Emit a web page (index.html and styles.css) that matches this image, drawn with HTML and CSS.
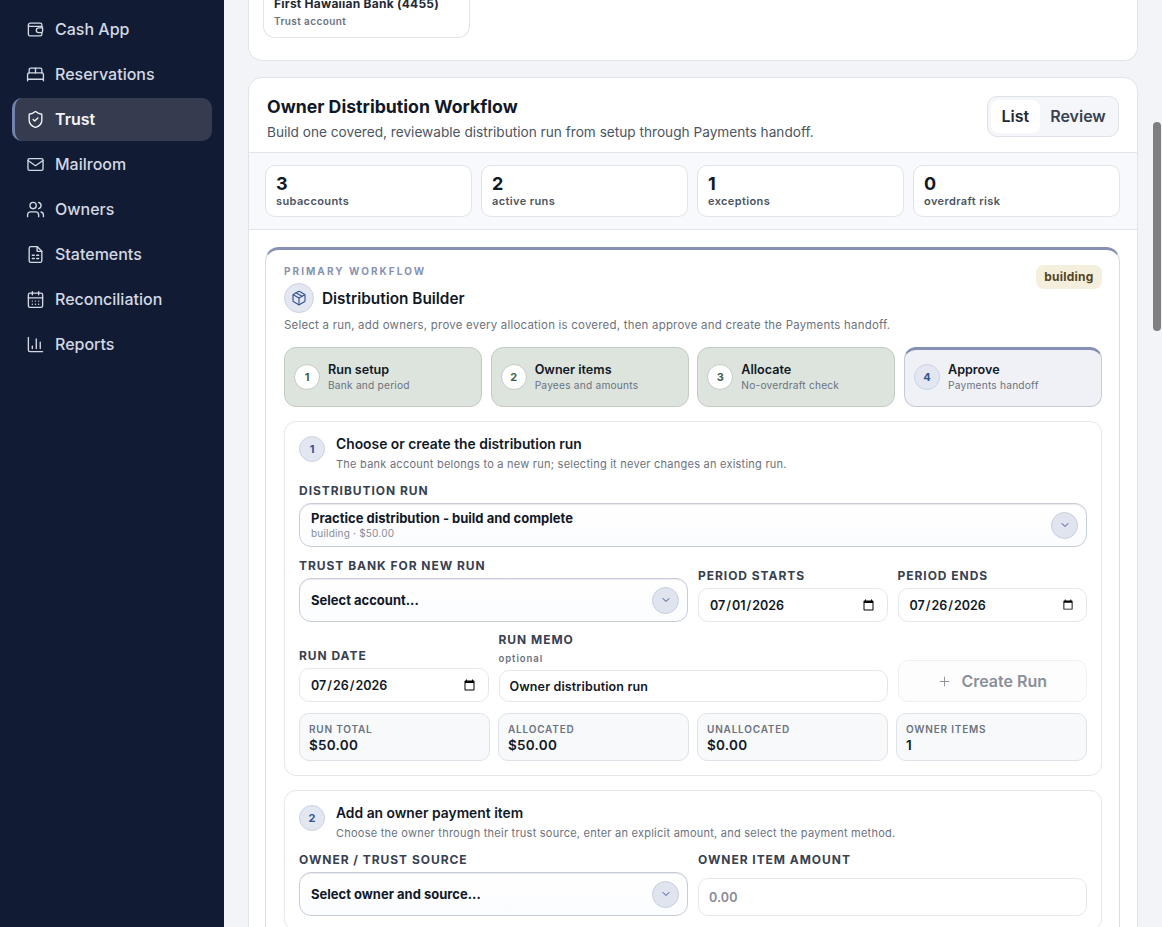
FILE: index.html
```html
<!DOCTYPE html>
<html lang="en">
<head>
    <meta charset="UTF-8">
    <meta name="viewport" content="width=device-width, initial-scale=1.0">
    <title>Owner Distribution Workflow</title>
    <link rel="stylesheet" href="styles.css">
</head>
<body>
    <div class="shell">
        <aside class="sidebar">
            <nav class="nav">
                <a class="nav-item">
                    <svg class="nav-icon" viewBox="0 0 24 24"><path d="M20 8V6a2 2 0 0 0-2-2H5.500A2.500 2.500 0 0 0 3 6.500V18a2 2 0 0 0 2 2h13a2 2 0 0 0 2-2v-2"/><path d="M3 7a2 2 0 0 0 2 1h14a2 2 0 0 1 2 2v4a2 2 0 0 1-2 2h-3a3 3 0 0 1 0-6h5"/></svg>
                    Cash App
                </a>
                <a class="nav-item">
                    <svg class="nav-icon" viewBox="0 0 24 24"><path d="M2 20v-8a2 2 0 0 1 2-2h16a2 2 0 0 1 2 2v8"/><path d="M4 10V6a2 2 0 0 1 2-2h12a2 2 0 0 1 2 2v4"/><path d="M12 4v6"/><path d="M2 18h20"/></svg>
                    Reservations
                </a>
                <a class="nav-item active">
                    <svg class="nav-icon" viewBox="0 0 24 24"><path d="M20 13c0 5-3.500 7.500-7.660 8.950a1 1 0 0 1-.67-.01C7.500 20.500 4 18 4 13V6a1 1 0 0 1 1-1c2 0 4.500-1.200 6.240-2.720a1.170 1.170 0 0 1 1.520 0C14.510 3.810 17 5 19 5a1 1 0 0 1 1 1z"/><path d="m9 12 2 2 4-4"/></svg>
                    Trust
                </a>
                <a class="nav-item">
                    <svg class="nav-icon" viewBox="0 0 24 24"><rect x="2.500" y="4.500" width="19" height="15" rx="2"/><path d="m2.500 7 9.500 6.500L21.500 7"/></svg>
                    Mailroom
                </a>
                <a class="nav-item">
                    <svg class="nav-icon" viewBox="0 0 24 24"><path d="M16 21v-2a4 4 0 0 0-4-4H6a4 4 0 0 0-4 4v2"/><circle cx="9" cy="7" r="4"/><path d="M22 21v-2a4 4 0 0 0-3-3.870"/><path d="M16 3.130a4 4 0 0 1 0 7.750"/></svg>
                    Owners
                </a>
                <a class="nav-item">
                    <svg class="nav-icon" viewBox="0 0 24 24"><path d="M14 2H6a2 2 0 0 0-2 2v16a2 2 0 0 0 2 2h12a2 2 0 0 0 2-2V8z"/><path d="M14 2v6h6"/><path d="M8 13h2.500M13.500 13H16M8 17h2.500M13.500 17H16"/></svg>
                    Statements
                </a>
                <a class="nav-item">
                    <svg class="nav-icon" viewBox="0 0 24 24"><path d="M8 2v4M16 2v4"/><rect x="3" y="4" width="18" height="18" rx="2"/><path d="M3 10h18"/><path d="M8 14h.010M12 14h.010M16 14h.010M8 18h.010M12 18h.010M16 18h.010"/></svg>
                    Reconciliation
                </a>
                <a class="nav-item">
                    <svg class="nav-icon" viewBox="0 0 24 24"><path d="M3 3v16a2 2 0 0 0 2 2h16"/><path d="M18 17V9M13 17V5M8 17v-3"/></svg>
                    Reports
                </a>
            </nav>
        </aside>

        <main class="content">
            <section class="panel accounts">
                <div class="account-card">
                    <div class="account-name">First Hawaiian Bank (4455)</div>
                    <div class="account-type">Trust account</div>
                </div>
            </section>

            <section class="panel">
                <header class="panel-head">
                    <div>
                        <h2 class="panel-title">Owner Distribution Workflow</h2>
                        <p class="panel-sub">Build one covered, reviewable distribution run from setup through Payments handoff.</p>
                    </div>
                    <div class="toggle">
                        <button class="toggle-btn on">List</button>
                        <button class="toggle-btn">Review</button>
                    </div>
                </header>

                <div class="stats">
                    <div class="stat"><strong>3</strong><span>subaccounts</span></div>
                    <div class="stat"><strong>2</strong><span>active runs</span></div>
                    <div class="stat"><strong>1</strong><span>exceptions</span></div>
                    <div class="stat"><strong>0</strong><span>overdraft risk</span></div>
                </div>

                <div class="panel-body">
                    <div class="builder">
                        <span class="badge">building</span>
                        <div class="eyebrow">PRIMARY WORKFLOW</div>
                        <div class="builder-title">
                            <span class="builder-icon">
                                <svg viewBox="0 0 24 24"><path d="M11 21.730a2 2 0 0 0 2 0l7-4A2 2 0 0 0 21 16V8a2 2 0 0 0-1-1.730l-7-4a2 2 0 0 0-2 0l-7 4A2 2 0 0 0 3 8v8a2 2 0 0 0 1 1.730z"/><path d="M12 22V12"/><path d="m3.300 7 8.700 5 8.700-5"/><path d="m7.500 4.270 9 5.150"/></svg>
                            </span>
                            <h3>Distribution Builder</h3>
                        </div>
                        <p class="builder-desc">Select a run, add owners, prove every allocation is covered, then approve and create the Payments handoff.</p>

                        <div class="steps">
                            <div class="step done">
                                <span class="step-num">1</span>
                                <div><div class="step-title">Run setup</div><div class="step-sub">Bank and period</div></div>
                            </div>
                            <div class="step done">
                                <span class="step-num">2</span>
                                <div><div class="step-title">Owner items</div><div class="step-sub">Payees and amounts</div></div>
                            </div>
                            <div class="step done">
                                <span class="step-num">3</span>
                                <div><div class="step-title">Allocate</div><div class="step-sub">No-overdraft check</div></div>
                            </div>
                            <div class="step current">
                                <span class="step-num">4</span>
                                <div><div class="step-title">Approve</div><div class="step-sub">Payments handoff</div></div>
                            </div>
                        </div>

                        <div class="section">
                            <div class="section-head">
                                <span class="section-num">1</span>
                                <div>
                                    <h4>Choose or create the distribution run</h4>
                                    <p>The bank account belongs to a new run; selecting it never changes an existing run.</p>
                                </div>
                            </div>
                            <div class="form-grid">
                                <div class="field span-4">
                                    <label>DISTRIBUTION RUN</label>
                                    <div class="picker">
                                        <div>
                                            <div class="picker-value">Practice distribution - build and complete</div>
                                            <div class="picker-sub">building · $50.00</div>
                                        </div>
                                        <span class="chevron"><svg viewBox="0 0 24 24"><path d="m6 9 6 6 6-6"/></svg></span>
                                    </div>
                                </div>
                                <div class="field span-2">
                                    <label>TRUST BANK FOR NEW RUN</label>
                                    <div class="picker">
                                        <div class="picker-value">Select account...</div>
                                        <span class="chevron"><svg viewBox="0 0 24 24"><path d="m6 9 6 6 6-6"/></svg></span>
                                    </div>
                                </div>
                                <div class="field">
                                    <label>PERIOD STARTS</label>
                                    <input class="input date" type="date" value="2026-07-01">
                                </div>
                                <div class="field">
                                    <label>PERIOD ENDS</label>
                                    <input class="input date" type="date" value="2026-07-26">
                                </div>
                                <div class="field">
                                    <label>RUN DATE</label>
                                    <input class="input date" type="date" value="2026-07-26">
                                </div>
                                <div class="field span-2">
                                    <label>RUN MEMO</label>
                                    <small>optional</small>
                                    <input class="input memo" type="text" value="Owner distribution run">
                                </div>
                                <button class="create-btn" disabled>
                                    <svg viewBox="0 0 24 24"><path d="M5 12h14M12 5v14"/></svg>
                                    Create Run
                                </button>
                            </div>
                            <div class="totals">
                                <div class="total"><span>RUN TOTAL</span><strong>$50.00</strong></div>
                                <div class="total"><span>ALLOCATED</span><strong>$50.00</strong></div>
                                <div class="total"><span>UNALLOCATED</span><strong>$0.00</strong></div>
                                <div class="total"><span>OWNER ITEMS</span><strong>1</strong></div>
                            </div>
                        </div>

                        <div class="section">
                            <div class="section-head">
                                <span class="section-num">2</span>
                                <div>
                                    <h4>Add an owner payment item</h4>
                                    <p>Choose the owner through their trust source, enter an explicit amount, and select the payment method.</p>
                                </div>
                            </div>
                            <div class="form-grid two">
                                <div class="field">
                                    <label>OWNER / TRUST SOURCE</label>
                                    <div class="picker">
                                        <div class="picker-value">Select owner and source...</div>
                                        <span class="chevron"><svg viewBox="0 0 24 24"><path d="m6 9 6 6 6-6"/></svg></span>
                                    </div>
                                </div>
                                <div class="field">
                                    <label>OWNER ITEM AMOUNT</label>
                                    <input class="input amount" type="text" placeholder="0.00">
                                </div>
                            </div>
                        </div>
                    </div>
                </div>
            </section>
        </main>

        <div class="scroll-thumb"></div>
    </div>
</body>
</html>
```

FILE: styles.css
```css
* {
    box-sizing: border-box;
    margin: 0;
}

html,
body {
    height: 100%;
    overflow: hidden;
}

body {
    font-family: Inter, "Liberation Sans", sans-serif;
    color: #111827;
    background: #f3f4f8;
}

.shell {
    position: relative;
    display: flex;
    height: 927px;
    overflow: hidden;
}

/* sidebar */
.sidebar {
    width: 224px;
    flex-shrink: 0;
    background: #111c34;
    padding: 8px 12px;
}

.nav {
    display: flex;
    flex-direction: column;
    gap: 2px;
}

.nav-item {
    display: flex;
    align-items: center;
    gap: 10px;
    height: 43px;
    padding: 0 0 1px 14px;
    border-radius: 10px;
    color: #d3d8e3;
    font-size: 16px;
    font-weight: 500;
}

.nav-item.active {
    background: #353c50;
    border-left: 3px solid #7284ad;
    padding-left: 11px;
    color: #f4f5f8;
    font-weight: 600;
}

.nav-icon {
    width: 19px;
    height: 19px;
    flex-shrink: 0;
    fill: none;
    stroke: currentColor;
    stroke-width: 1.7;
    stroke-linecap: round;
    stroke-linejoin: round;
}

/* main column */
.content {
    flex: 1;
    min-width: 0;
    padding: 0 24px;
}

.panel {
    background: #ffffff;
    border: 1px solid #e1e4ea;
    border-radius: 14px;
}

.accounts {
    margin-top: -23px;
    margin-bottom: 16px;
    padding: 0 14px 22px;
    height: 84px;
    border-top: 0;
    border-radius: 0 0 14px 14px;
}

.account-card {
    width: 207px;
    height: 61px;
    padding: 19px 10px 0;
    border: 1px solid #e1e4ea;
    border-top: 0;
    border-radius: 0 0 12px 12px;
}

.account-name {
    font-size: 12px;
    font-weight: 700;
    line-height: 16px;
    color: #1f2937;
    letter-spacing: 0.02em;
}

.account-type {
    margin-top: 2px;
    font-size: 10px;
    font-weight: 600;
    line-height: 14px;
    color: #6b7280;
    letter-spacing: 0.04em;
}

.panel-head {
    display: flex;
    justify-content: space-between;
    align-items: center;
    height: 75px;
    padding: 6px 18px 0;
    border-bottom: 1px solid #e1e4ea;
}

.panel-title {
    font-size: 17.700px;
    font-weight: 700;
    line-height: 24px;
    color: #111827;
}

.panel-sub {
    margin-top: 4px;
    font-size: 13.650px;
    line-height: 18px;
    color: #4b5563;
}

.toggle {
    display: flex;
    width: 132px;
    height: 41px;
    margin-top: -4px;
    padding: 3px;
    background: #f5f6f9;
    border: 1px solid #dfe2ea;
    border-radius: 10px;
}

.toggle-btn {
    border: 0;
    padding: 0 10.500px;
    background: none;
    border-radius: 8px;
    font: 600 16px Inter, "Liberation Sans", sans-serif;
    color: #374151;
}

.toggle-btn.on {
    background: #ffffff;
    color: #1f2937;
}

.stats {
    display: grid;
    grid-template-columns: repeat(4, 1fr);
    gap: 9px;
    padding: 12px 17px 12px 16px;
    height: 77px;
    background: #f8f9fc;
    border-bottom: 1px solid #e1e4ea;
}

.stat {
    display: flex;
    flex-direction: column;
    justify-content: center;
    padding: 0 10px 1px;
    background: #ffffff;
    border: 1px solid #e1e4ea;
    border-radius: 10px;
}

.stat strong {
    font-size: 18px;
    font-weight: 700;
    line-height: 19px;
    color: #111827;
}

.stat span {
    margin-top: 1px;
    font-size: 11px;
    font-weight: 600;
    line-height: 14px;
    color: #4b5563;
    letter-spacing: 0.035em;
}

.panel-body {
    padding: 17px 17px 0 16px;
}

/* builder card */
.builder {
    position: relative;
    padding: 15px 17px 24px 18px;
    background: #ffffff;
    border: 1px solid #d9dde6;
    border-top: 3px solid #8790b2;
    border-radius: 14px;
}

.badge {
    position: absolute;
    top: 15px;
    right: 17px;
    padding: 0 8.500px;
    height: 24px;
    line-height: 24px;
    background: #f4eedc;
    border-radius: 8px;
    color: #54451f;
    font-size: 12px;
    font-weight: 700;
    letter-spacing: 0.02em;
}

.eyebrow {
    font-size: 10px;
    font-weight: 700;
    line-height: 12px;
    letter-spacing: 0.205em;
    color: #8892b0;
}

.builder-title {
    display: flex;
    align-items: center;
    gap: 8px;
    margin-top: 6px;
}

.builder-title h3 {
    font-size: 15.360px;
    font-weight: 600;
    color: #111827;
}

.builder-icon {
    display: flex;
    align-items: center;
    justify-content: center;
    width: 30px;
    height: 30px;
    background: #e3e7f2;
    border: 1px solid #cbd2e3;
    border-radius: 50%;
}

.builder-icon svg {
    width: 16px;
    height: 16px;
    fill: none;
    stroke: #34528f;
    stroke-width: 1.7;
    stroke-linecap: round;
    stroke-linejoin: round;
}

.builder-desc {
    margin-top: 5px;
    font-size: 11.450px;
    line-height: 14px;
    color: #6b7280;
    letter-spacing: 0.02em;
}

.steps {
    display: grid;
    grid-template-columns: repeat(4, 1fr);
    gap: 8.670px;
    margin-top: 15px;
}

.step {
    display: flex;
    align-items: center;
    gap: 8px;
    height: 60px;
    padding: 0 9px;
    border: 1px solid #c3ccc3;
    border-radius: 12px;
}

.step.done {
    background: #dde4dd;
}

.step.current {
    background: #eff1f7;
    border-color: #c6cbdb;
    border-top: 3px solid #8790b2;
    padding-bottom: 2px;
}

.step-num {
    display: flex;
    align-items: center;
    justify-content: center;
    flex-shrink: 0;
    width: 26px;
    height: 26px;
    background: #ffffff;
    border: 1px solid #c3ccc3;
    border-radius: 50%;
    font-size: 11px;
    font-weight: 700;
    color: #3f5f45;
}

.step.current .step-num {
    background: #e3e7f2;
    border-color: #cbd2e3;
    color: #34528f;
}

.step-title {
    font-size: 12.600px;
    font-weight: 600;
    line-height: 16px;
    color: #111827;
}

.step-sub {
    font-size: 10.200px;
    line-height: 15px;
    color: #6b7280;
    letter-spacing: 0.02em;
}

/* form sections */
.section {
    margin-top: 14px;
    padding: 14px;
    border: 1px solid #e5e7ec;
    border-radius: 12px;
}

.section-head {
    display: flex;
    gap: 11px;
}

.section-num {
    display: flex;
    align-items: center;
    justify-content: center;
    flex-shrink: 0;
    width: 26px;
    height: 26px;
    background: #e3e7f2;
    border: 1px solid #cbd2e3;
    border-radius: 50%;
    font-size: 11px;
    font-weight: 700;
    color: #34528f;
}

.section-head h4 {
    font-size: 13.850px;
    font-weight: 600;
    line-height: 16px;
    color: #111827;
}

.section-head p {
    margin-top: 5px;
    font-size: 11px;
    line-height: 14px;
    color: #6b7280;
    letter-spacing: 0.022em;
}

.form-grid {
    display: grid;
    grid-template-columns: repeat(4, 1fr);
    gap: 11px 10px;
    align-items: end;
    margin-top: 13px;
}

.form-grid.two {
    grid-template-columns: 1fr 1fr;
    align-items: stretch;
}

.form-grid.two .field {
    justify-content: space-between;
}

.span-2 {
    grid-column: span 2;
}

.span-4 {
    grid-column: span 4;
    margin-bottom: 1px;
}

.field {
    display: flex;
    flex-direction: column;
}

.field label {
    font-size: 12px;
    font-weight: 700;
    line-height: 14px;
    margin-bottom: 5px;
    letter-spacing: 0.08em;
    color: #374151;
}

.field small {
    margin: 1px 0 5px;
    font-size: 9.500px;
    font-weight: 600;
    line-height: 12px;
    letter-spacing: 0.1em;
    color: #6b7280;
}

.picker {
    display: flex;
    align-items: center;
    justify-content: space-between;
    height: 44px;
    padding: 0 8px 0 11px;
    background: linear-gradient(#ffffff, #fbfcfe);
    border: 1px solid #c8ccd9;
    border-radius: 12px;
    box-shadow: inset 0 1px 0 #e8eaf0;
}

.picker-value {
    font-size: 13px;
    font-weight: 700;
    line-height: 15px;
    color: #111827;
}

.picker-sub {
    margin-top: 1px;
    font-size: 10px;
    line-height: 13px;
    color: #858b97;
    letter-spacing: 0.02em;
}

.chevron {
    display: flex;
    align-items: center;
    justify-content: center;
    width: 27px;
    height: 27px;
    background: #e0e4ef;
    border: 1px solid #c8cede;
    border-radius: 50%;
}

.chevron svg {
    width: 12px;
    height: 12px;
    fill: none;
    stroke: #34528f;
    stroke-width: 2;
    stroke-linecap: round;
    stroke-linejoin: round;
}

.input {
    width: 100%;
    height: 34px;
    padding: 0 10px;
    background: #ffffff;
    border: 1px solid #e5e7ec;
    border-radius: 10px;
    font: 600 12.500px Inter, "Liberation Sans", sans-serif;
    letter-spacing: 0.01em;
    color: #111827;
}

.input.date {
    letter-spacing: 0;
}

.input.memo {
    height: 32px;
}

.input.amount {
    height: 38px;
}

.input.amount::placeholder {
    color: #858b97;
}

.create-btn {
    display: flex;
    align-items: center;
    justify-content: center;
    gap: 9px;
    height: 42px;
    background: #fdfdfe;
    border: 1px solid #eef0f3;
    border-radius: 10px;
    font: 600 16px Inter, "Liberation Sans", sans-serif;
    color: #8a8f99;
}

.create-btn svg {
    width: 15px;
    height: 15px;
    fill: none;
    stroke: currentColor;
    stroke-width: 1.500;
    stroke-linecap: round;
}

.totals {
    display: grid;
    grid-template-columns: repeat(4, 1fr);
    gap: 8px;
    margin-top: 11px;
}

.total {
    display: flex;
    flex-direction: column;
    justify-content: center;
    height: 48px;
    padding: 2px 9px 0;
    background: #f7f9fb;
    border: 1px solid #dfe2e8;
    border-radius: 10px;
}

.total span {
    font-size: 10px;
    font-weight: 600;
    line-height: 14px;
    letter-spacing: 0.08em;
    color: #6b7280;
}

.total strong {
    font-size: 13.500px;
    font-weight: 600;
    line-height: 18px;
    letter-spacing: 0.02em;
    color: #111827;
}

/* the page's own scrollbar, drawn over the edge */
.scroll-thumb {
    position: absolute;
    top: 122px;
    right: 1px;
    width: 8px;
    height: 209px;
    background: #7f7f7f;
    border-radius: 4px;
}
```
